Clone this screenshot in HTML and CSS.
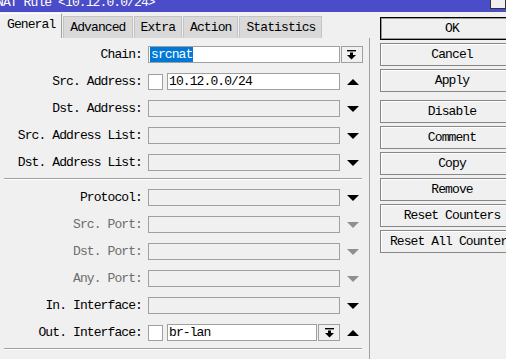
FILE: index.html
```html
<!DOCTYPE html>
<html lang="en">
<head>
    <meta charset="UTF-8">
    <title>NAT Rule &lt;10.12.0.0/24&gt;</title>
    <link rel="stylesheet" href="styles.css">
</head>
<body>
    <div class="titlebar">
        <span class="title">NAT Rule &lt;10.12.0.0/24&gt;</span>
        <span class="winbtn"></span>
    </div>
    <div class="window">
        <div class="main">
            <div class="tabs">
                <div class="tab active">General</div>
                <div class="tab">Advanced</div>
                <div class="tab">Extra</div>
                <div class="tab">Action</div>
                <div class="tab">Statistics</div>
            </div>
            <div class="panel">
                <div class="group">
                    <div class="row">
                        <div class="label">Chain:</div>
                        <div class="field"><div class="box on"><span class="sel">srcnat</span></div></div>
                        <div class="arrow">
                            <div class="drop big">
                                <svg width="9" height="10" viewBox="0 0 9 10"><rect x="0" y="0" width="9" height="1.4"/><rect x="3" y="2.5" width="3" height="3"/><polygon points="0,5 9,5 4.5,9.6"/></svg>
                            </div>
                        </div>
                    </div>
                    <div class="row">
                        <div class="label">Src. Address:</div>
                        <div class="field"><div class="check"></div><div class="box on">10.12.0.0/24</div></div>
                        <div class="arrow"><svg width="12" height="6" viewBox="0 0 12 6"><polygon points="0,6 6,0 12,6"/></svg></div>
                    </div>
                    <div class="row">
                        <div class="label">Dst. Address:</div>
                        <div class="field"><div class="box"></div></div>
                        <div class="arrow"><svg width="12" height="6" viewBox="0 0 12 6"><polygon points="0,0 12,0 6,6"/></svg></div>
                    </div>
                    <div class="row">
                        <div class="label">Src. Address List:</div>
                        <div class="field"><div class="box"></div></div>
                        <div class="arrow"><svg width="12" height="6" viewBox="0 0 12 6"><polygon points="0,0 12,0 6,6"/></svg></div>
                    </div>
                    <div class="row">
                        <div class="label">Dst. Address List:</div>
                        <div class="field"><div class="box"></div></div>
                        <div class="arrow"><svg width="12" height="6" viewBox="0 0 12 6"><polygon points="0,0 12,0 6,6"/></svg></div>
                    </div>
                </div>
                <div class="sep"></div>
                <div class="group">
                    <div class="row">
                        <div class="label">Protocol:</div>
                        <div class="field"><div class="box"></div></div>
                        <div class="arrow"><svg width="12" height="6" viewBox="0 0 12 6"><polygon points="0,0 12,0 6,6"/></svg></div>
                    </div>
                    <div class="row off">
                        <div class="label">Src. Port:</div>
                        <div class="field"><div class="box"></div></div>
                        <div class="arrow"><svg width="12" height="6" viewBox="0 0 12 6"><polygon points="0,0 12,0 6,6"/></svg></div>
                    </div>
                    <div class="row off">
                        <div class="label">Dst. Port:</div>
                        <div class="field"><div class="box"></div></div>
                        <div class="arrow"><svg width="12" height="6" viewBox="0 0 12 6"><polygon points="0,0 12,0 6,6"/></svg></div>
                    </div>
                    <div class="row off">
                        <div class="label">Any. Port:</div>
                        <div class="field"><div class="box"></div></div>
                        <div class="arrow"><svg width="12" height="6" viewBox="0 0 12 6"><polygon points="0,0 12,0 6,6"/></svg></div>
                    </div>
                    <div class="row">
                        <div class="label">In. Interface:</div>
                        <div class="field"><div class="box"></div></div>
                        <div class="arrow"><svg width="12" height="6" viewBox="0 0 12 6"><polygon points="0,0 12,0 6,6"/></svg></div>
                    </div>
                    <div class="row">
                        <div class="label">Out. Interface:</div>
                        <div class="field">
                            <div class="check"></div>
                            <div class="box on">br-lan</div>
                            <div class="drop">
                                <svg width="9" height="10" viewBox="0 0 9 10"><rect x="0" y="0" width="9" height="1.4"/><rect x="3" y="2.5" width="3" height="3"/><polygon points="0,5 9,5 4.5,9.6"/></svg>
                            </div>
                        </div>
                        <div class="arrow"><svg width="12" height="6" viewBox="0 0 12 6"><polygon points="0,6 6,0 12,6"/></svg></div>
                    </div>
                </div>
                <div class="sep"></div>
            </div>
        </div>
        <div class="side">
            <div class="btn default">OK</div>
            <div class="btn">Cancel</div>
            <div class="btn apply">Apply</div>
            <div class="btn">Disable</div>
            <div class="btn">Comment</div>
            <div class="btn">Copy</div>
            <div class="btn">Remove</div>
            <div class="btn">Reset Counters</div>
            <div class="btn">Reset All Counters</div>
        </div>
    </div>
</body>
</html>
```

FILE: styles.css
```css
body {
    margin: 0;
    width: 506px;
    height: 359px;
    overflow: hidden;
    background-color: #f0f0f0;
    font-family: "Liberation Mono", monospace;
    font-size: 13px;
    letter-spacing: -0.9px;
    color: #000;
}
.titlebar {
    height: 12px;
    background-color: #4b4dc8;
    display: flex;
    overflow: hidden;
}
.title {
    color: #fff;
    margin-left: -4px;
    margin-top: -5px;
    line-height: 15px;
    white-space: nowrap;
}
.winbtn {
    margin-left: auto;
    width: 14px;
    height: 8px;
    border: 1px solid #333;
    border-top: none;
    background-color: #f0f0f0;
}
.window { display: flex; }
.main { width: 370px; flex-shrink: 0; }

/* tabs */
.tabs {
    display: flex;
    align-items: flex-end;
    gap: 1px;
    height: 26px;
}
.tab {
    height: 22px;
    line-height: 22px;
    padding: 0 6px;
    background-color: #d9d9d9;
    border: 1px solid #c4c4c4;
    border-bottom: none;
    box-sizing: border-box;
    white-space: nowrap;
}
.tab.active {
    height: 25px;
    line-height: 22px;
    background-color: #f0f0f0;
    border-color: #fff #a0a0a0 #f0f0f0 #fff;
    border-left: none;
    padding-left: 7px;
}

/* form panel */
.panel {
    height: 321px;
    box-sizing: border-box;
    border-right: 1px solid #a0a0a0;
    padding-top: 8px;
}
.group {
    display: flex;
    flex-direction: column;
    gap: 10px;
}
.row {
    display: flex;
    align-items: center;
    height: 17px;
}
.label {
    width: 142px;
    text-align: right;
    white-space: nowrap;
}
.row.off .label { color: #6d6d6d; }
.row.off .arrow svg { fill: #8c918c; }
.field {
    display: flex;
    align-items: center;
    width: 192px;
    height: 17px;
    margin-left: 6px;
}
.box {
    flex: 1;
    height: 17px;
    box-sizing: border-box;
    border: 1px solid #a0a0a0;
    background-color: #f0f0f0;
    padding-left: 1px;
    line-height: 15px;
    white-space: nowrap;
    overflow: hidden;
}
.box.on { background-color: #fff; }
.sel {
    background-color: #0078d7;
    color: #fff;
    padding: 0 1px;
}
.check {
    width: 15px;
    height: 16px;
    box-sizing: border-box;
    border: 1px solid #a0a0a0;
    background-color: #fff;
    margin-right: 4px;
}
.arrow {
    width: 25px;
    display: flex;
    justify-content: center;
    align-items: center;
}
.arrow svg { fill: #000; }
.drop {
    width: 22px;
    height: 17px;
    box-sizing: border-box;
    border: 1px solid #a0a0a0;
    background-color: #f0f0f0;
    display: flex;
    justify-content: center;
    align-items: center;
    margin-left: 1px;
}
.drop.big {
    margin-left: 0;
    margin-right: 2px;
}
.sep {
    height: 1px;
    background-color: #a0a0a0;
    border-bottom: 1px solid #fff;
    margin: 7px 7px 9px 4px;
}

/* buttons */
.side {
    padding: 5px 0 0 10px;
}
.btn {
    width: 144px;
    height: 23px;
    line-height: 22px;
    box-sizing: border-box;
    border: 1px solid #868686;
    box-shadow: inset 1px 1px 0 #fff;
    background-color: #f0f0f0;
    text-align: center;
    white-space: nowrap;
    margin-bottom: 3px;
}
.btn.default {
    border-color: #000;
    box-shadow: inset 0 0 0 1px #9a9a9a;
}
.btn.apply { margin-bottom: 8px; }
```
